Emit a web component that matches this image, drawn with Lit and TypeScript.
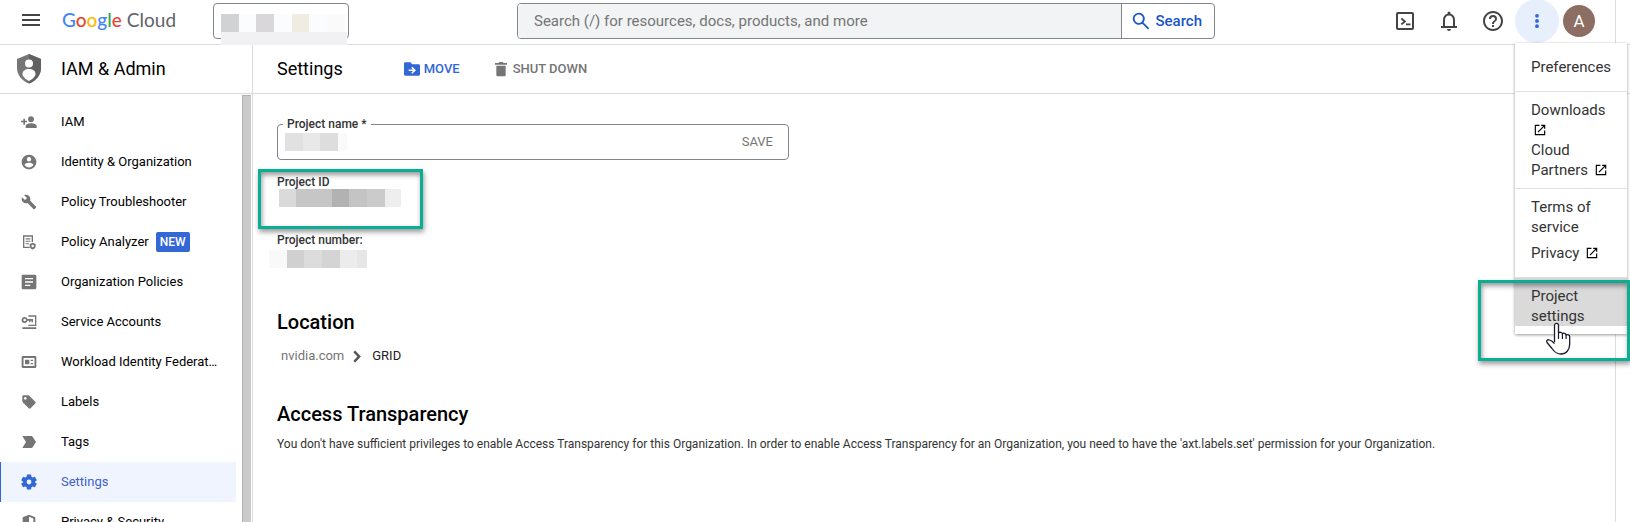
import { LitElement, html, css, svg } from "lit";
import { customElement } from "lit/decorators.js";
import { classMap } from "lit/directives/class-map.js";

const icon = (body: unknown, size = 18, cls = "") => html`<svg class=${"icon " + cls} width=${size} height=${size} viewBox="0 0 24 24" fill="currentColor" aria-hidden="true">${body}</svg>`;

const glyphs = {
  menu: svg`<path d="M3 18h18v-2H3v2zm0-5h18v-2H3v2zm0-7v2h18V6H3z"/>`,
  iam: svg`<path d="M15 12.500c2.500 0 4.500-2 4.500-4.500s-2-4.500-4.500-4.500-4.500 2-4.500 4.500 2 4.500 4.500 4.500zM6 10V7H3.500v3H0v2.500h3.500V16H6v-3.500h3V10zm9 4c-2.700 0-8 1.300-8 4v3h16.500v-3c0-2.700-5.500-4-8.500-4z"/>`,
  person: svg`<path d="M12 1C5.900 1 1 5.900 1 12s4.900 11 11 11 11-4.900 11-11S18.100 1 12 1zm0 3.500a3.300 3.300 0 1 1 0 6.600 3.300 3.300 0 0 1 0-6.600zm0 15.700c-2.700 0-5.200-1.400-6.600-3.600 0-2.200 4.400-3.400 6.600-3.400s6.600 1.200 6.600 3.400c-1.400 2.200-3.900 3.600-6.600 3.600z"/>`,
  wrench: svg`<path d="M22.700 19l-9.100-9.100c.9-2.300.4-5-1.500-6.900-2-2-5-2.400-7.400-1.300L9 6 6 9 1.600 4.700C.4 7.100.9 10.100 2.900 12.100c1.900 1.900 4.600 2.400 6.900 1.500l9.100 9.100c.4.4 1 .4 1.400 0l2.300-2.300c.5-.4.5-1.100.1-1.400z"/>`,
  analyzer: svg`<path d="M3 2h15v10h-2V4H5v15h8v2H3zM7 6.500h7v1.600H7zm0 3.600h7v1.600H7zm0 3.600h5v1.600H7z"/><path fill-rule="evenodd" d="M17.500 13l4.500 2v3c0 2.600-2 4.500-4.500 5.200-2.500-.7-4.500-2.600-4.500-5.200v-3zm0 3a1.900 1.900 0 1 0 0 3.800 1.900 1.900 0 0 0 0-3.800z"/>`,
  policies: svg`<path fill-rule="evenodd" d="M3 1h18a2 2 0 0 1 2 2v18a2 2 0 0 1-2 2H3a2 2 0 0 1-2-2V3a2 2 0 0 1 2-2zm3 5v2h12V6zm0 5v2h12v-2zm0 5v2h8v-2z"/>`,
  service: svg`<path fill-rule="evenodd" d="M11 2h12v16H11v-2h10V4H11zM5.500 4.500a4.500 4.500 0 0 1 4.200 3H18v5h-2.200v-2.200h-1.600v2.200H12v-2.200H9.700a4.500 4.500 0 1 1-4.200-5.800zm0 2.500a2 2 0 1 0 0 4 2 2 0 0 0 0-4zM2 20h21v2.500H2z"/>`,
  workload: svg`<path fill-rule="evenodd" d="M3 3h18a2 2 0 0 1 2 2v14a2 2 0 0 1-2 2H3a2 2 0 0 1-2-2V5a2 2 0 0 1 2-2zm.8 3v12h16.400V6zM6 8.500h6.500v7H6zm8.500 0H18v2h-3.500zm0 5H18v2h-3.500z"/>`,
  label: svg`<path d="M21.400 11.600l-9-9C12 2.200 11.500 2 11 2H4c-1.100 0-2 .9-2 2v7c0 .6.2 1.100.6 1.400l9 9c.4.4.9.6 1.400.6s1-.2 1.400-.6l7-7c.4-.4.6-.9.6-1.400s-.2-1.100-.6-1.400zM6.500 8.500a2 2 0 1 1 0-4 2 2 0 0 1 0 4z"/>`,
  tag: svg`<path d="M2 3h13.500c.8 0 1.500.4 2 1l5 8-5 8c-.5.6-1.200 1-2 1H2l5.500-9z"/>`,
  gear: svg`<path fill-rule="evenodd" d="M9 .8h6l.6 3.400 1.900 1.100L20.800 4l3 5.200L21.100 11.400v1.200l2.700 2.200-3 5.200-3.300-1.300-1.900 1.100-.6 3.400H9l-.6-3.400-1.900-1.100L3.200 20l-3-5.200 2.700-2.200v-1.200L.2 9.200 3.200 4l3.300 1.300 1.900-1.100zM12 8.400a3.600 3.600 0 1 0 0 7.200 3.600 3.600 0 0 0 0-7.200z"/>`,
  privacy: svg`<path fill-rule="evenodd" d="M12 1l9.500 4v7c0 5.500-4 9.500-9.500 11-5.500-1.500-9.500-5.500-9.500-11V5zm0 3.200v16.300c3.800-1.300 6.500-4.300 6.500-8.500V6.800z"/>`,
  folder: svg`<path fill-rule="evenodd" d="M10 2H2C.9 2 0 2.900 0 4v16c0 1.100.9 2 2 2h20c1.100 0 2-.9 2-2V7c0-1.100-.9-2-2-2H12zm2.500 6.500l5.500 5.300-5.500 5.300-1.600-1.600 2.400-2.500H7v-2.400h6.300l-2.400-2.500z"/>`,
  trash: svg`<path d="M5 21c0 1.100.9 2 2 2h10c1.100 0 2-.9 2-2V7H5zM21 3h-5l-1.500-1.500h-5L8 3H3v2.500h18z"/>`,
  search: svg`<path fill-rule="evenodd" d="M9 1a8 8 0 0 1 6.300 12.900l7.700 7.600-1.700 1.700-7.600-7.700A8 8 0 1 1 9 1zm0 2.400a5.600 5.600 0 1 0 0 11.200A5.600 5.600 0 0 0 9 3.400z"/>`,
  shell: svg`<path fill-rule="evenodd" d="M5 3h14a2 2 0 0 1 2 2v14a2 2 0 0 1-2 2H5a2 2 0 0 1-2-2V5a2 2 0 0 1 2-2zm0 2v14h14V5z"/><path d="M7.700 10l1.300-1.200 4.300 3.600L9 16l-1.300-1.200 2.800-2.400zM13 14.500h4.500v1.800H13z"/>`,
  bell: svg`<path d="M12 22c1.100 0 2-.9 2-2h-4c0 1.100.9 2 2 2zm6-5v-6c0-3.100-1.600-5.600-4.500-6.300V4a1.500 1.500 0 0 0-3 0v.7C7.600 5.400 6 7.900 6 11v6H4v2h16v-2zm-2 0H8v-6c0-2.500 1.500-4.500 4-4.500s4 2 4 4.500z"/>`,
  help: svg`<path d="M11 18h2v-2h-2v2zm1-16C6.500 2 2 6.500 2 12s4.500 10 10 10 10-4.500 10-10S17.500 2 12 2zm0 18c-4.400 0-8-3.600-8-8s3.600-8 8-8 8 3.600 8 8-3.600 8-8 8zm0-14a4 4 0 0 0-4 4h2a2 2 0 1 1 4 0c0 2-3 1.800-3 5h2c0-2.300 3-2.500 3-5a4 4 0 0 0-4-4z"/>`,
  more: svg`<path d="M12 8.500a2.100 2.100 0 1 0 0-4.200 2.100 2.100 0 0 0 0 4.200zm0 5.600a2.100 2.100 0 1 0 0-4.200 2.100 2.100 0 0 0 0 4.200zm0 5.600a2.100 2.100 0 1 0 0-4.200 2.100 2.100 0 0 0 0 4.200z"/>`,
  open: svg`<path d="M19 19H5V5h6V3H3v18h18v-8h-2zM14 3v2h3.600l-9.800 9.800 1.400 1.400L19 6.400V10h2V3z"/>`,
  chevron: svg`<path d="M7 5l2.800-2.600L19 12l-9.200 9.600L7 19l6.500-7z"/>`,
};

const navItems: { icon: unknown; label: string; isNew?: boolean; active?: boolean }[] = [
  { icon: glyphs.iam, label: "IAM" },
  { icon: glyphs.person, label: "Identity & Organization" },
  { icon: glyphs.wrench, label: "Policy Troubleshooter" },
  { icon: glyphs.analyzer, label: "Policy Analyzer", isNew: true },
  { icon: glyphs.policies, label: "Organization Policies" },
  { icon: glyphs.service, label: "Service Accounts" },
  { icon: glyphs.workload, label: "Workload Identity Federation" },
  { icon: glyphs.label, label: "Labels" },
  { icon: glyphs.tag, label: "Tags" },
  { icon: glyphs.gear, label: "Settings", active: true },
  { icon: glyphs.privacy, label: "Privacy & Security" },
];

/* Each redacted value is a run of [width, colour] cells. */
type Cell = [number, string];
const cells = (list: Cell[]) =>
  html`<span class="mosaic" aria-hidden="true">${list.map(([w, c]) => html`<i style="width:${w}px;background:${c}"></i>`)}</span>`;

const pickerCells: Cell[] = [[18, "#d0d2d4"], [17, "#fafcfe"], [18, "#d9d7da"], [18, "#fafcfe"], [17, "#f1ece1"], [18, "#fafcfe"], [18, "#fafafb"], [2, "#fdfdfd"]];
const nameCells: Cell[] = [[18, "#e1e1e1"], [17, "#e8e8e8"], [18, "#dddddd"], [9, "#fafafa"]];
const idCells: Cell[] = [[17, "#dadada"], [36, "#c6c6c6"], [17, "#b2b2b2"], [18, "#c4c4c4"], [18, "#cbcbcb"], [16, "#eeeeee"]];
const numberCells: Cell[] = [[18, "#f9f9f9"], [17, "#d0d0d0"], [18, "#dcdcdc"], [18, "#d4d4d4"], [17, "#ececec"], [10, "#e6e6e6"]];

@customElement("app-root")
export class AppRoot extends LitElement {
  static styles = css`
    :host {
      display: flex;
      flex-direction: column;
      height: 100vh;
      overflow: hidden;
      position: relative;
      background: #fff;
      color: #000;
      font: 13px/20px Roboto, "Liberation Sans", sans-serif;
    }
    * { box-sizing: border-box; }
    button, input { font: inherit; color: inherit; background: none; border: 0; padding: 0; margin: 0; }
    a { color: inherit; text-decoration: none; }
    h1, h2, p { margin: 0; }
    .icon { display: block; flex: none; }
    .mosaic { display: flex; flex: none; height: 18px; }
    .mosaic i { flex: none; }

    .topbar {
      flex: none;
      display: flex;
      align-items: flex-start;
      height: 45px;
      border-bottom: 1px solid #dadce0;
    }
    .hamburger { margin: 8px 19px 0; color: #444; }
    .logo { display: flex; gap: 5px; width: 151px; margin-top: 8px; font: 19px/24px Lato, sans-serif; color: #5f6368; }
    .word { font-weight: 500; }
    .blue { color: #4285f4; }
    .red { color: #ea4335; }
    .yellow { color: #fbbc04; }
    .green { color: #34a853; }
    .picker {
      display: flex;
      flex-direction: column;
      justify-content: flex-start;
      align-items: flex-start;
      width: 136px;
      height: 36px;
      margin-top: 3px;
      padding: 10px 0 0 7px;
      border: 1px solid #80868b;
      border-radius: 4px;
    }
    .strip { flex: none; height: 13px; width: 126px; background: #f1f1f3; position: relative; }
    .search {
      flex: 0 1 698px;
      display: flex;
      height: 36px;
      margin: 3px auto 0 168px;
      border: 1px solid #80868b;
      border-radius: 4px;
      overflow: hidden;
    }
    .query { flex: 1; min-width: 0; padding: 0 16px; background: #f1f3f4; font-size: 15px; }
    .query::placeholder { color: #757575; opacity: 1; }
    .go {
      display: flex;
      align-items: center;
      gap: 5px;
      padding: 0 12px 0 10px;
      border-left: 1px solid #80868b;
      color: #1a56c8;
      font-size: 15px;
      font-weight: 500;
    }
    .tools { display: flex; align-items: center; height: 41px; color: #444; }
    .tool { width: 44px; display: grid; place-items: center; }
    .more { height: 44px; border-radius: 50%; background: #e8effc; color: #3367d6; }
    .avatar {
      width: 32px;
      height: 32px;
      margin: 1px 35px 0 4px;
      border-radius: 50%;
      background: #8d6e63;
      color: #fff;
      font-size: 17px;
    }

    .body { flex: 1; display: flex; min-height: 0; }
    .side { flex: none; width: 253px; display: flex; flex-direction: column; border-right: 1px solid #dadce0; }
    .bar {
      flex: none;
      display: flex;
      align-items: center;
      height: 49px;
      border-bottom: 1px solid #dadce0;
      font-size: 18px;
    }
    .shield { margin: 0 20px 0 17px; }
    .title { font-size: 18px; font-weight: 400; }
    .scroller { flex: 1; display: flex; min-height: 0; }
    .nav { flex: 1; min-width: 0; padding-top: 8px; margin-right: 6px; overflow: hidden; }
    .thumb { width: 9px; margin: 1px 1px 0 0; background: #cacaca; border: 1px solid #b3b3b3; border-width: 1px 0 0 1px; }
    .item { display: flex; align-items: center; height: 40px; padding: 0 18px 0 20px; border-left: 1px solid transparent; }
    .item .icon { margin-right: 24px; color: #757575; }
    .text { overflow: hidden; white-space: nowrap; text-overflow: ellipsis; }
    .active { border-color: #3367d6; background: #eff4fe; color: #3f62c9; }
    .active .icon { color: #3367d6; }
    .new { margin-left: 7px; padding: 0 4px; border-radius: 2px; background: #3367d6; color: #fff; font-size: 12px; font-weight: 500; }

    .main { flex: 1; min-width: 0; }
    .actions { padding-left: 24px; }
    .action { display: flex; align-items: center; gap: 4px; font-size: 13px; font-weight: 500; }
    .move { margin: 0 33px 0 61px; color: #3367d6; }
    .muted { color: #757575; }
    .content { padding: 22px 24px 0; }
    .field {
      width: 512px;
      max-width: 100%;
      height: 44px;
      margin: 0;
      padding: 0 15px 8px 7px;
      border: 1px solid #80868b;
      border-radius: 4px;
    }
    .field legend { margin-left: -2px; padding: 0 4px; font-size: 12px; line-height: 16px; color: #333; font-weight: 500; }
    .row { display: flex; align-items: center; gap: 12px; height: 20px; }
    .name { flex: 1; min-width: 0; }
    .label { font-size: 12px; line-height: 14px; font-weight: 500; color: #333; }
    .project-id { position: relative; margin-top: 15px; height: 58px; }
    .project-id .mosaic { margin-left: 2px; }
    .ring {
      position: absolute;
      border: 3px solid #0aae92;
      box-shadow: 1px 3px 5px rgba(0, 0, 0, 0.4), inset 1px 3px 5px rgba(0, 0, 0, 0.4);
      pointer-events: none;
    }
    .ring-id { left: -19px; top: -6px; width: 165px; height: 60px; }
    .number { margin-left: -8px; padding-top: 3px; }
    h2 { font-size: 20px; line-height: 24px; font-weight: 500; }
    .location { margin-top: 42px; }
    .crumbs { display: flex; align-items: center; margin: 12px 0 36px 4px; color: #222; }
    .crumbs .icon { margin: 0 8px 0 5px; color: #555; }
    .note { margin-top: 8px; font-size: 12px; color: #333; }

    .edge { position: absolute; top: 0; right: 14px; bottom: 0; width: 1px; background: #dadce0; }
    .menu {
      position: absolute;
      top: 43px;
      right: 3px;
      width: 112px;
      padding-bottom: 8px;
      background: #fff;
      box-shadow: 0 1px 3px rgba(0, 0, 0, 0.4);
      font-size: 15px;
      color: #333;
    }
    .group { padding: 8px 0; border-bottom: 1px solid #e0e0e0; }
    .group a { display: block; padding: 0 10px 0 16px; }
    .group .icon { display: inline-block; vertical-align: -2px; margin-left: 2px; color: #000; }
    .first { padding: 14px 0; }
    .legal a + a { margin-top: 6px; }
    .legal { padding-bottom: 14px; }
    .last { padding: 0; border: 0; }
    .last a { padding-top: 8px; background: #dadada; }
    .ring-menu { right: 0; top: 280px; width: 152px; height: 81px; }
    .cursor { position: absolute; right: 58px; top: 322px; }
  `;

  render() {
    return html`
      <header class="topbar">
        <button class="hamburger" aria-label="Navigation menu">${icon(glyphs.menu, 24)}</button>
        <a class="logo" href="#"><span class="word"><span class="blue">G</span><span class="red">o</span><span class="yellow">o</span><span class="blue">g</span><span class="green">l</span><span class="red">e</span></span><span>Cloud</span></a>
        <button class="picker" aria-label="Select a project">${cells(pickerCells)}<span class="strip"></span></button>
        <form class="search" role="search">
          <input class="query" type="text" aria-label="Search" placeholder="Search (/) for resources, docs, products, and more" />
          <button class="go" type="button">${icon(glyphs.search, 18)}Search</button>
        </form>
        <div class="tools">
          <button class="tool" aria-label="Cloud Shell">${icon(glyphs.shell, 24)}</button>
          <button class="tool" aria-label="Notifications">${icon(glyphs.bell, 24)}</button>
          <button class="tool" aria-label="Help">${icon(glyphs.help, 24)}</button>
          <button class="tool more" aria-label="More">${icon(glyphs.more, 22)}</button>
          <button class="avatar" aria-label="Account">A</button>
        </div>
      </header>
      <div class="body">
        <aside class="side">
          <div class="bar">
            <svg class="shield" width="24" height="30" viewBox="0 0 24 30" aria-hidden="true">
              <path fill="#757575" d="M12 0L0 5v9c0 7 5 13 12 15.500C19 27 24 21 24 14V5z"/>
              <path fill="#616161" d="M12 0l12 5v9c0 7-5 13-12 15.500z"/>
              <circle cx="12" cy="9.500" r="4" fill="#fff"/>
              <path fill="#fff" d="M12 15c4 0 6.500 2 6.500 5 0 2.500-3 5.300-6.500 7-3.500-1.700-6.500-4.500-6.500-7 0-3 2.500-5 6.500-5z"/>
            </svg>
            <span>IAM &amp; Admin</span>
          </div>
          <div class="scroller">
            <nav class="nav">
              ${navItems.map((n) => html`<a href="#" class=${classMap({ item: true, active: !!n.active })}>${icon(n.icon, 16)}<span class="text">${n.label}</span>${n.isNew ? html`<span class="new">NEW</span>` : ""}</a>`)}
            </nav>
            <div class="thumb"></div>
          </div>
        </aside>
        <main class="main">
          <div class="bar actions">
            <h1 class="title">Settings</h1>
            <button class="action move">${icon(glyphs.folder, 16)}MOVE</button>
            <button class="action muted">${icon(glyphs.trash, 16)}SHUT DOWN</button>
          </div>
          <div class="content">
            <fieldset class="field">
              <legend><label for="name">Project name *</label></legend>
              <div class="row">
                ${cells(nameCells)}
                <input id="name" class="name" type="text" />
                <button class="muted">SAVE</button>
              </div>
            </fieldset>
            <div class="project-id">
              <div class="label">Project ID</div>
              ${cells(idCells)}
              <div class="ring ring-id"></div>
            </div>
            <div class="label">Project number:</div>
            <div class="number">${cells(numberCells)}</div>
            <h2 class="location">Location</h2>
            <div class="crumbs"><a class="muted" href="#">nvidia.com</a>${icon(glyphs.chevron, 15)}<span>GRID</span></div>
            <h2>Access Transparency</h2>
            <p class="note">You don't have sufficient privileges to enable Access Transparency for this Organization. In order to enable Access Transparency for an Organization, you need to have the 'axt.labels.set' permission for your Organization.</p>
          </div>
        </main>
      </div>
      <div class="edge"></div>
      <nav class="menu" aria-label="More options">
        <div class="group first"><a href="#">Preferences</a></div>
        <div class="group"><a href="#">Downloads ${icon(glyphs.open, 14)}</a><a href="#">Cloud Partners ${icon(glyphs.open, 14)}</a></div>
        <div class="group legal"><a href="#">Terms of service</a><a href="#">Privacy ${icon(glyphs.open, 14)}</a></div>
        <div class="group last"><a href="#">Project settings</a></div>
      </nav>
      <div class="ring ring-menu"></div>
      <svg class="cursor" width="27" height="34" viewBox="0 0 27 34" aria-hidden="true">
        <path fill="#fff" stroke="#1b1b2b" stroke-width="1.300" stroke-linejoin="round" d="M9.500 20V3.500c0-2.800 4-2.800 4 0V11c.8-1.200 3.700-1 3.900.8 1-1 3.400-.7 3.700 1.200 1.200-.8 3.600-.3 3.600 1.800V22c0 6-3.500 10-8.700 10-4.500 0-7-2.500-9-5.500L2 20.500c-1-2 .5-3.300 2.500-2.500 2 .6 3.500 1.800 5 3.500"/>
        <path fill="none" stroke="#1b1b2b" stroke-width="1.200" d="M13.500 10.500V17m3.900-5.500V17m3.700-4.500V17"/>
      </svg>
    `;
  }
}
